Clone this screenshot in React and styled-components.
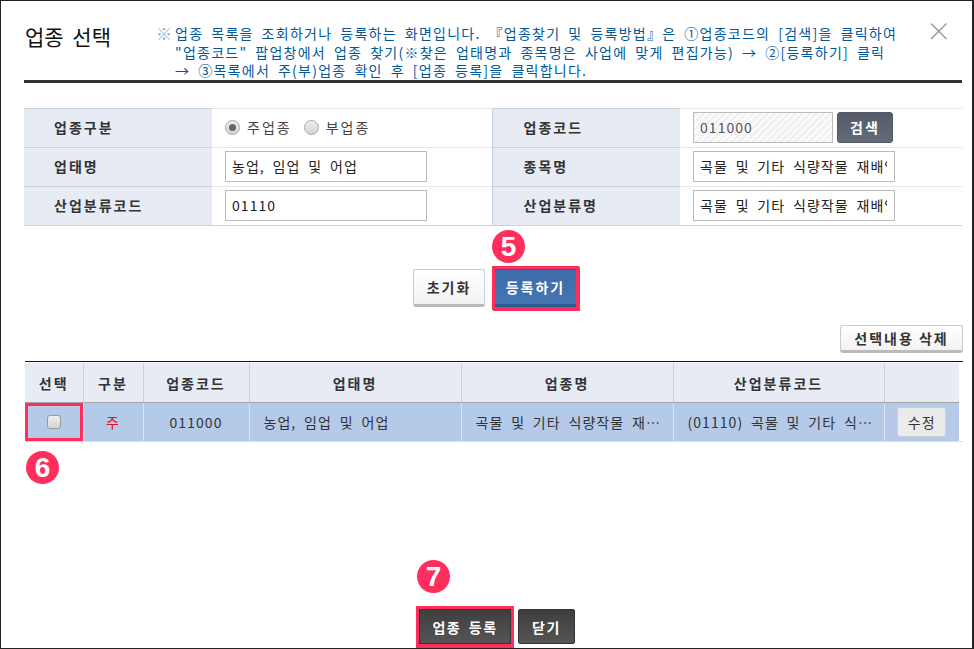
import React from "react"
import styled, { createGlobalStyle } from "styled-components"

const GlobalStyle = createGlobalStyle`
  html, body {
    margin: 0;
    padding: 0;
    background: #fff;
  }
  body {
    font-family: "Noto Sans CJK KR", "Liberation Sans", sans-serif;
    font-size: 14px;
    color: #333;
  }
  * {
    box-sizing: border-box;
  }
`

const App = () => (
  <>
    <GlobalStyle />
    <Frame>
      <Header>
        <Title>업종 선택</Title>
        <Notice>
          <NoticeMark>※</NoticeMark>
          <NoticeText>
            <NoticeLine>업종 목록을 조회하거나 등록하는 화면입니다. 『업종찾기 및 등록방법』은 ①업종코드의 [검색]을 클릭하여</NoticeLine>
            <NoticeLine>"업종코드" 팝업창에서 업종 찾기(※찾은 업태명과 종목명은 사업에 맞게 편집가능) → ②[등록하기] 클릭</NoticeLine>
            <NoticeLine>→ ③목록에서 주(부)업종 확인 후 [업종 등록]을 클릭합니다.</NoticeLine>
          </NoticeText>
        </Notice>
        <CloseButton aria-label="닫기">
          <svg width="18" height="18" viewBox="0 0 18 18">
            <path d="M1 1.5 16.5 17M16.5 1.5 1 17" stroke="#8b96a3" strokeWidth="1.3" fill="none" />
          </svg>
        </CloseButton>
      </Header>

      <FormTable>
        <colgroup>
          <col width="188" />
          <col width="280" />
          <col width="188" />
          <col />
        </colgroup>
        <tbody>
          <tr>
            <LabelCell>업종구분</LabelCell>
            <ValueCell>
              <RadioGroup>
                <RadioDot $checked />
                <RadioText>주업종</RadioText>
                <RadioDot />
                <RadioText>부업종</RadioText>
              </RadioGroup>
            </ValueCell>
            <LabelCell $divided>업종코드</LabelCell>
            <ValueCell>
              <CodeGroup>
                <CodeInput readOnly value="011000" />
                <SearchButton>검색</SearchButton>
              </CodeGroup>
            </ValueCell>
          </tr>
          <tr>
            <LabelCell>업태명</LabelCell>
            <ValueCell><TextInput readOnly value="농업, 임업 및 어업" /></ValueCell>
            <LabelCell $divided>종목명</LabelCell>
            <ValueCell><TextInput readOnly value="곡물 및 기타 식량작물 재배업" /></ValueCell>
          </tr>
          <tr>
            <LabelCell>산업분류코드</LabelCell>
            <ValueCell><TextInput readOnly value="01110" /></ValueCell>
            <LabelCell $divided>산업분류명</LabelCell>
            <ValueCell><TextInput readOnly value="곡물 및 기타 식량작물 재배업" /></ValueCell>
          </tr>
        </tbody>
      </FormTable>

      <ActionRow>
        <Badge $left={79} $top={-39}>5</Badge>
        <LightButton>초기화</LightButton>
        <BlueButton>등록하기</BlueButton>
      </ActionRow>

      <DeleteRow>
        <LightButton $wide>선택내용 삭제</LightButton>
      </DeleteRow>

      <ListWrap>
        <ListTable>
          <colgroup>
            <col width="58" />
            <col width="60" />
            <col width="106" />
            <col width="212" />
            <col width="212" />
            <col width="211" />
            <col />
          </colgroup>
          <thead>
            <tr>
              <HeadCell>선택</HeadCell>
              <HeadCell>구분</HeadCell>
              <HeadCell>업종코드</HeadCell>
              <HeadCell>업태명</HeadCell>
              <HeadCell>업종명</HeadCell>
              <HeadCell>산업분류코드</HeadCell>
              <HeadCell />
            </tr>
          </thead>
          <tbody>
            <tr>
              <BodyCell $marked><CheckBox /></BodyCell>
              <BodyCell $red>주</BodyCell>
              <BodyCell>011000</BodyCell>
              <BodyCell $left>농업, 임업 및 어업</BodyCell>
              <BodyCell $clip>곡물 및 기타 식량작물 재배업</BodyCell>
              <BodyCell $clip>(01110) 곡물 및 기타 식량작물 재배업</BodyCell>
              <BodyCell $flush><EditButton>수정</EditButton></BodyCell>
            </tr>
          </tbody>
        </ListTable>
        <Badge $left={1} $top={89}>6</Badge>
      </ListWrap>

      <Footer>
        <Badge $left={-2} $top={-49}>7</Badge>
        <DarkButton $marked>업종 등록</DarkButton>
        <DarkButton>닫기</DarkButton>
      </Footer>
    </Frame>
  </>
)

const Frame = styled.div`
  display: flex;
  flex-direction: column;
  width: 974px;
  height: 649px;
  padding: 0 10px 0 23px;
  border: solid #222;
  border-width: 1px 2px 1px 1px;
  overflow: hidden;
  background: #fff;
`

const Header = styled.header`
  position: relative;
  display: flex;
  flex: none;
  height: 82px;
  padding: 20px 0 0 1px;
  border-bottom: 3px solid #333;
`

const Title = styled.h1`
  flex: none;
  width: 132px;
  margin: 0;
  font-size: 21px;
  font-weight: 400;
  line-height: 30px;
  word-spacing: 4px;
  color: #111;
`

const Notice = styled.div`
  display: flex;
  font-size: 14px;
  line-height: 18.5px;
  color: #00599d;
  padding-top: 3px;
`

const NoticeMark = styled.span`
  flex: none;
  width: 19px;
  margin: 0 0 0 -1px;
  font-size: 16px;
  color: #8fb1d2;
`

const NoticeText = styled.div`
  white-space: nowrap;
  letter-spacing: 1.25px;
  word-spacing: 3.6px;
`

const NoticeLine = styled.div``

const CloseButton = styled.button`
  position: absolute;
  top: 21px;
  right: 14px;
  display: flex;
  padding: 0;
  border: 0;
  background: none;
`

const FormTable = styled.table`
  flex: none;
  width: 938px;
  margin-top: 25px;
  border-collapse: collapse;
  table-layout: fixed;
  border-top: 1px solid #c6d2de;
  border-bottom: 1px solid #c6d2de;
`

const LabelCell = styled.td`
  height: 39px;
  padding: 0 0 3px ${(p) => (p.$divided ? "31px" : "30px")};
  border-top: 1px solid #c8d0dc;
  background: #e6ebf4;
  font-size: 14px;
  font-weight: 700;
  color: #333;
  letter-spacing: 2px;
  ${(p) => p.$divided && "border-left: 1px solid #c8d0dc;"}
`

const ValueCell = styled.td`
  height: 39px;
  padding: 0 0 2px 13px;
  border-top: 1px solid #e8e8e8;
`

const RadioGroup = styled.div`
  display: flex;
  align-items: center;
`

const RadioDot = styled.span`
  flex: none;
  position: relative;
  width: 15px;
  height: 15px;
  margin-right: 7px;
  border: 1px solid #aaa;
  border-radius: 50%;
  background: linear-gradient(#eee, #d4d4d4);
  ${(p) =>
    p.$checked &&
    `&::after {
      content: "";
      position: absolute;
      top: 3px;
      left: 3px;
      width: 7px;
      height: 7px;
      border-radius: 50%;
      background: #666;
    }`}
`

const RadioText = styled.span`
  margin-right: 12px;
  font-size: 14px;
  color: #444;
  letter-spacing: 2px;
`

const CodeGroup = styled.div`
  display: flex;
  align-items: center;
  gap: 4px;
`

const TextInput = styled.input`
  display: block;
  width: 202px;
  height: 31px;
  padding: 0 7px 0 6px;
  border: 1px solid #bbb;
  border-radius: 0;
  outline: 0;
  font: inherit;
  font-size: 14px;
  letter-spacing: 1.05px;
  word-spacing: 3.6px;
  color: #222;
  background: #fff;
`

const CodeInput = styled(TextInput)`
  width: 140px;
  color: #555;
  background: repeating-linear-gradient(-45deg, #f0f0f0 0 2px, #fafafa 2px 5px);
`

const SearchButton = styled.button`
  width: 56px;
  height: 31px;
  padding: 0;
  border: 1px solid #54596a;
  border-radius: 3px;
  background: linear-gradient(#555a6a, #666b79);
  font: inherit;
  font-size: 14px;
  font-weight: 700;
  letter-spacing: 2px;
  color: #fff;
`

const ActionRow = styled.div`
  position: relative;
  display: flex;
  flex: none;
  align-self: flex-start;
  gap: 10px;
  margin: 43px 0 0 389px;
`

const Badge = styled.span`
  position: absolute;
  left: ${(p) => p.$left}px;
  top: ${(p) => p.$top}px;
  display: flex;
  align-items: center;
  justify-content: center;
  width: 33px;
  height: 33px;
  border-radius: 50%;
  background: #ff2e5d;
  font-family: "Liberation Sans", sans-serif;
  font-size: 28px;
  font-weight: 700;
  color: #fff;
`

const LightButton = styled.button`
  flex: none;
  width: ${(p) => (p.$wide ? "123px" : "72px")};
  height: ${(p) => (p.$wide ? "28px" : "38px")};
  padding: 0;
  border: 1px solid #ccc;
  border-bottom: 3px solid #bbb;
  border-radius: 3px;
  background: linear-gradient(#fff, #f2f2f2);
  font: inherit;
  font-size: 14px;
  font-weight: 700;
  letter-spacing: 2px;
  color: #333;
`

const BlueButton = styled.button`
  flex: none;
  width: 81px;
  height: 38px;
  padding: 0;
  border: 0;
  border-top: 1px solid #2f5b96;
  border-bottom: 3px solid #2b5a94;
  background: linear-gradient(#3d6ca8, #4375b0);
  box-shadow: 0 0 0 3px #ff2e5d, 1px 1px 0 3px #ff2e5d;
  font: inherit;
  font-size: 14px;
  font-weight: 700;
  letter-spacing: 2px;
  color: #fff;
`

const DeleteRow = styled.div`
  display: flex;
  flex: none;
  justify-content: flex-end;
  margin: 18px -1px 0 0;
`

const ListWrap = styled.div`
  position: relative;
  flex: none;
  margin: 8px -1px 0 1px;
  padding-top: 1px;
  border-top: 1px solid #111;
  border-bottom: 1px solid #ddd;
`

const ListTable = styled.table`
  width: 934px;
  border-collapse: collapse;
  table-layout: fixed;
`

const HeadCell = styled.th`
  height: 39px;
  padding: 1px 0 0;
  border-left: 1px solid #c8d0dc;
  border-bottom: 1px solid #a5a5a5;
  background: #e6ebf4;
  font-size: 14px;
  font-weight: 700;
  letter-spacing: 2px;
  color: #333;
  &:first-child {
    border-left: 0;
  }
`

const BodyCell = styled.td`
  position: relative;
  height: 39px;
  padding: ${(p) => (p.$flush ? "0" : p.$clip ? "1px 4px 0 14px" : "1px 14px 0")};
  border-left: 1px solid #dfe6f0;
  background: #b4cae8;
  font-size: 14px;
  letter-spacing: 1.05px;
  word-spacing: 3.6px;
  color: ${(p) => (p.$red ? "#e8101c" : "#333")};
  text-align: ${(p) => (p.$left || p.$clip ? "left" : "center")};
  white-space: nowrap;
  overflow: hidden;
  text-overflow: ellipsis;
  &:first-child {
    border-left: 0;
  }
  ${(p) => p.$marked && "box-shadow: inset 0 0 0 3px #ff2e5d;"}
`

const CheckBox = styled.span`
  display: block;
  width: 14px;
  height: 14px;
  margin: 0 auto;
  border: 1px solid #999;
  border-radius: 3px;
  background: linear-gradient(#eee, #d6d6d6);
`

const EditButton = styled.button`
  display: block;
  width: 49px;
  height: 30px;
  margin: 0 auto;
  padding: 0;
  border: 1px solid #ccd0d6;
  border-radius: 3px;
  background: #ebebeb;
  font: inherit;
  font-size: 14px;
  letter-spacing: 1.2px;
  color: #333;
`

const Footer = styled.footer`
  position: relative;
  display: flex;
  flex: none;
  align-self: flex-start;
  gap: 7px;
  margin: auto 0 4px 395px;
`

const DarkButton = styled.button`
  flex: none;
  width: ${(p) => (p.$marked ? "92px" : "57px")};
  height: 35px;
  padding: 0;
  border: 1px solid #333;
  border-radius: ${(p) => (p.$marked ? "0" : "2px")};
  background: linear-gradient(#3e3e3e, #555);
  font: inherit;
  font-size: 14px;
  font-weight: 700;
  letter-spacing: 1.5px;
  word-spacing: 3px;
  color: #fff;
  ${(p) => p.$marked && "box-shadow: 0 0 0 3px #ff2e5d, 0 1px 0 3px #ff2e5d;"}
`

export default App
